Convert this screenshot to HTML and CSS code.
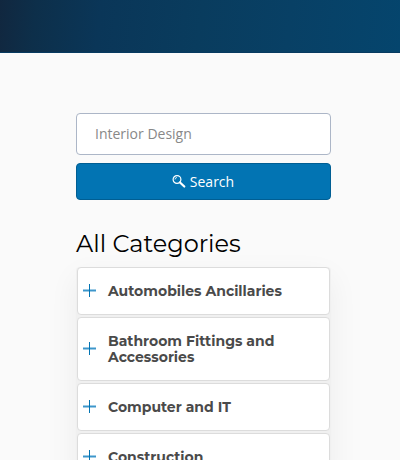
FILE: index.html
```html
<!DOCTYPE html>
<html lang="en">
<head>
<meta charset="utf-8">
<meta name="viewport" content="width=device-width, initial-scale=1">
<title>All Categories</title>
<link rel="stylesheet" href="styles.css">
</head>
<body>
<header class="banner"></header>
<main class="content">
  <form class="search">
    <input class="search-input" type="text" aria-label="Search categories" placeholder="Interior Design">
    <button class="search-button" type="button">
      <svg class="search-icon" viewBox="0 0 14 14" aria-hidden="true"><circle cx="5" cy="4.500" r="3.900" fill="none" stroke="currentColor" stroke-width="1.2"/><path d="M3 4.500a2 2 0 0 1 2-2" fill="none" stroke="currentColor" stroke-width=".8"/><path d="M8 7.500l4.300 4" stroke="currentColor" stroke-width="2.200" stroke-linecap="round"/></svg>
      <span>Search</span>
    </button>
  </form>
  <h1 class="title">All Categories</h1>
  <ul class="categories">
    <li><button class="category" type="button"><svg class="plus" viewBox="0 0 13 13" aria-hidden="true"><path d="M0 6.500h13"/><path class="plus-stem" d="M6.500 0v13"/></svg><span>Automobiles Ancillaries</span></button></li>
    <li><button class="category" type="button"><svg class="plus" viewBox="0 0 13 13" aria-hidden="true"><path d="M0 6.500h13"/><path class="plus-stem" d="M6.500 0v13"/></svg><span>Bathroom Fittings and Accessories</span></button></li>
    <li><button class="category" type="button"><svg class="plus" viewBox="0 0 13 13" aria-hidden="true"><path d="M0 6.500h13"/><path class="plus-stem" d="M6.500 0v13"/></svg><span>Computer and IT</span></button></li>
    <li><button class="category" type="button"><svg class="plus" viewBox="0 0 13 13" aria-hidden="true"><path d="M0 6.500h13"/><path class="plus-stem" d="M6.500 0v13"/></svg><span>Construction</span></button></li>
  </ul>
</main>
</body>
</html>
```
FILE: styles.css
```css
* {
  box-sizing: border-box;
}

body {
  margin: 0;
  height: 100vh;
  overflow: hidden;
  background: #fafafa;
  color: #000;
  font-family: "Open Sans", sans-serif;
  font-size: 14px;
}

.banner {
  height: 53px;
  background: linear-gradient(96deg, #11273f 0%, #0d2f4a 9%, #0a3658 25%, #093c5e 50%, #084065 72%, #05456d 100%);
  border-bottom: 1px solid #073a60;
}

.content {
  padding: 60px 69px 0 76px;
}

.search {
  display: flex;
  flex-direction: column;
  gap: 8px;
}

.search-input {
  width: 100%;
  height: 42px;
  padding: 0 18px 2px;
  border: 1px solid #acb6c7;
  border-radius: 4px;
  background: #fff;
  color: #333;
  font: inherit;
}

.search-input::placeholder {
  color: #888;
  opacity: 1;
}

.search-button {
  display: flex;
  align-items: center;
  justify-content: center;
  gap: 4px;
  height: 37px;
  padding: 0 1px 0 0;
  border: 1px solid #005e93;
  border-radius: 4px;
  background: #0274b3;
  color: #fff;
  font: inherit;
}

.search-icon {
  width: 14px;
  height: 14px;
}

.title {
  margin: 28px 0 7px;
  font: 400 24px/32px Montserrat, Inter, sans-serif;
}

.categories {
  display: flex;
  flex-direction: column;
  gap: 2px;
  margin: 0;
  padding: 0 1px;
  list-style: none;
  border-radius: 4px;
  background: #f0f0f0;
  box-shadow: 0 10px 30px rgba(0, 0, 0, 0.06);
}

.category {
  display: flex;
  align-items: center;
  gap: 12px;
  width: 100%;
  padding: 15px 25px 15px 5px;
  border: 1px solid #dcdcdc;
  border-radius: 4px;
  background: #fff;
  color: #4a4a4a;
  font: 700 14px/16px Montserrat, Inter, sans-serif;
  text-align: left;
}

.plus {
  flex: none;
  width: 13px;
  height: 14px;
  padding-bottom: 1px;
  stroke: #3d96cb;
  stroke-width: 2;
}

.plus-stem {
  stroke: #0274b3;
  stroke-width: 1;
}
```
